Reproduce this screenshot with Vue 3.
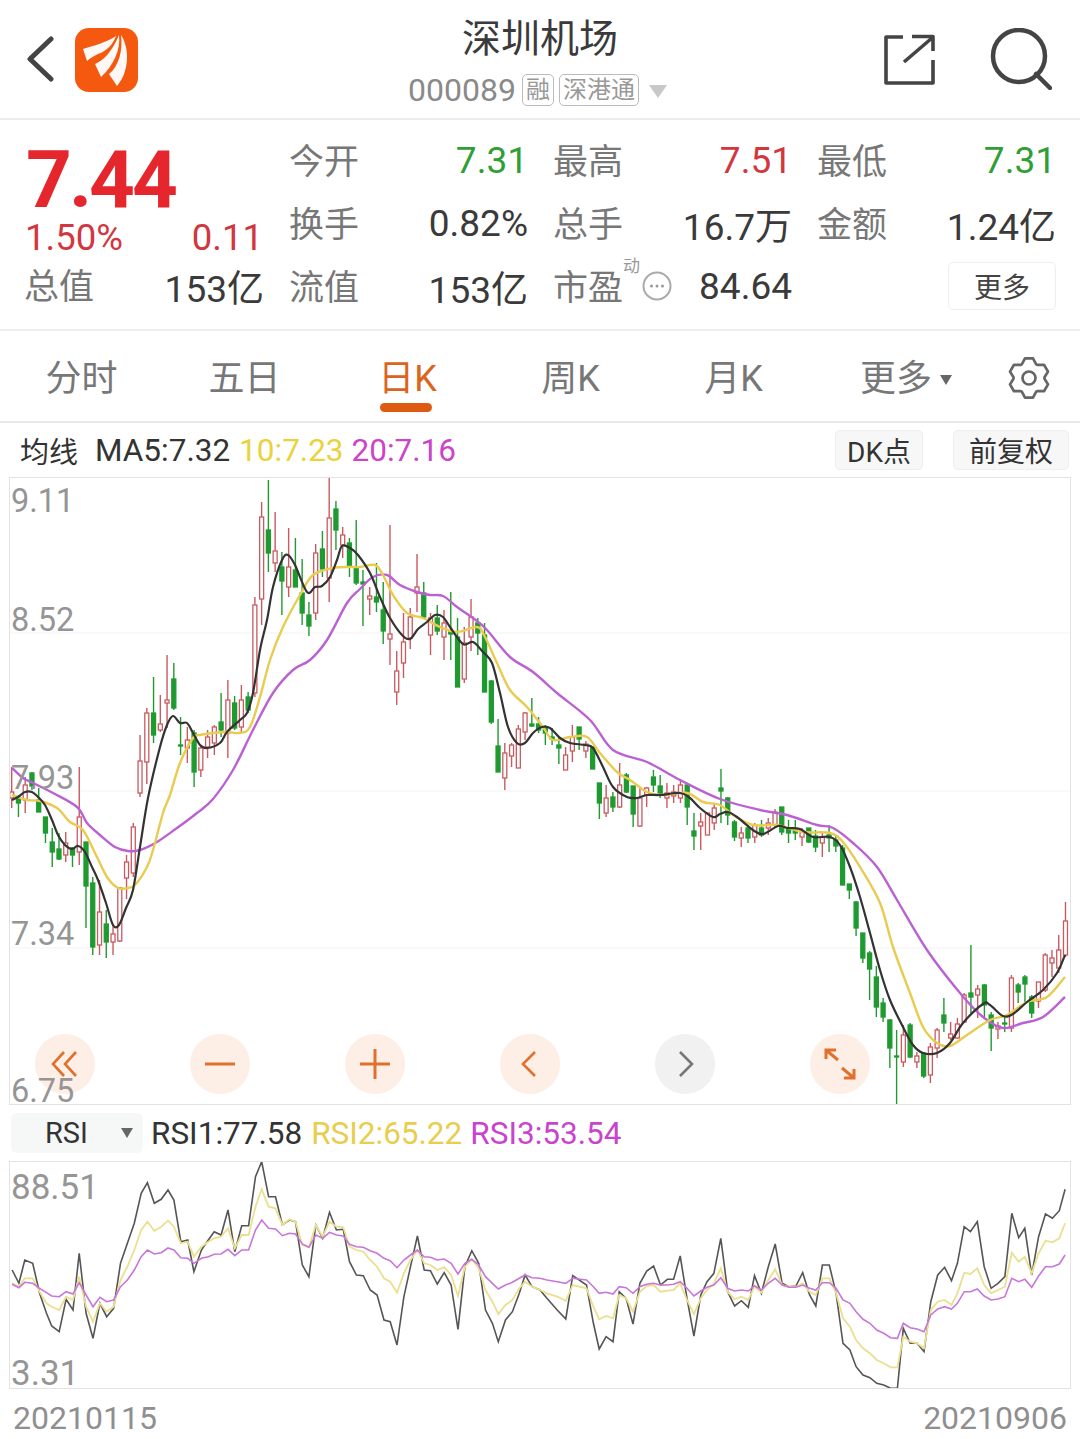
<template>
  <div class="page">
    <header class="topbar">
      <div class="topbar-left">
        <svg class="back" width="28" height="48" viewBox="0 0 28 48">
          <path d="M25 3 L4 23 L25 43" fill="none" stroke="#444" stroke-width="5" stroke-linecap="round" stroke-linejoin="round" />
        </svg>
        <svg class="logo" width="63" height="64" viewBox="0 0 63 64">
          <rect width="63" height="64" rx="14" fill="#f4590f" />
          <path d="M8 21 C18 18 32 14 41 8 C38 16 32 23 23 26 C19 28 15 30 12 33 Z" fill="#fff" opacity="0.96" />
          <path d="M20 36 C28 33 37 24 44 7 C46 22 38 38 26 49 Z" fill="#fff" opacity="0.96" />
          <path d="M34 46 C44 38 48 22 46 7 C52 16 54 30 50 43 C48 50 45 54 42 58 Z" fill="#fff" opacity="0.96" />
        </svg>
      </div>
      <div class="topbar-title">
        <div class="name">深圳机场</div>
        <div class="code-row">
          <span class="code">000089</span>
          <span class="tag">融</span>
          <span class="tag">深港通</span>
          <span class="code-arrow"></span>
        </div>
      </div>
      <div class="topbar-right">
        <svg width="54" height="54" viewBox="0 0 54 54" fill="none" stroke="#444" stroke-width="3.6">
          <path d="M22 5 H5 V51 H52 V28" stroke-linejoin="round" />
          <path d="M23 30 L51 6 M31 4.5 H52 V19" stroke-linejoin="round" />
        </svg>
        <svg width="62" height="62" viewBox="0 0 62 62" fill="none" stroke="#444" stroke-width="4.5">
          <circle cx="29" cy="28" r="26" />
          <path d="M46 46 L60 60" stroke-linecap="round" />
        </svg>
      </div>
    </header>

    <section class="quote">
      <div class="price-col">
        <div class="price">7.44</div>
        <div class="change"><span>1.50%</span><span>0.11</span></div>
        <div class="stat"><span class="label">总值</span><span class="value">153亿</span></div>
      </div>
      <div class="stats">
        <div class="stat" v-for="item in stats" :key="item.label">
          <span class="label">{{ item.label }}</span>
          <span class="value" :class="item.tone">{{ item.value }}</span>
        </div>
        <div class="stat">
          <span class="label pe">市盈<sup>动</sup>
            <svg class="pe-icon" width="30" height="30" viewBox="0 0 30 30">
              <circle cx="15" cy="15" r="13.5" fill="none" stroke="#aaa" stroke-width="2" />
              <circle cx="9.5" cy="15" r="1.5" fill="#999" />
              <circle cx="15" cy="15" r="1.5" fill="#999" />
              <circle cx="20.5" cy="15" r="1.5" fill="#999" />
            </svg>
          </span>
          <span class="value">84.64</span>
        </div>
        <div class="stat stat-more"><button class="more">更多</button></div>
      </div>
    </section>

    <nav class="tabs">
      <div class="tab" v-for="tab in tabs" :key="tab" :class="{ active: tab === '日K' }">{{ tab }}</div>
      <div class="tab tab-drop">更多<span class="drop"></span></div>
      <div class="tab-gear">
        <svg width="42" height="44" viewBox="-21 -22 42 44" fill="none" stroke="#666" stroke-width="2.7" stroke-linejoin="round">
          <path :d="gearPath" />
          <circle r="6.5" />
        </svg>
      </div>
    </nav>

    <div class="ma-row">
      <span class="ma-title">均线</span>
      <span class="ma5">MA5:7.32</span>
      <span class="ma10">10:7.23</span>
      <span class="ma20">20:7.16</span>
      <span class="chip chip-dk">DK点</span>
      <span class="chip chip-fq">前复权</span>
    </div>

    <div class="kline">
      <svg class="kline-svg" width="1060" height="626" viewBox="10 478 1060 626">
        <line v-for="y in [633, 791, 948]" :key="y" x1="10" x2="1070" :y1="y" :y2="y" stroke="#f3f3f3" />
        <g v-for="c in candles" :key="c.x">
          <line :x1="c.x" :x2="c.x" :y1="c.high" :y2="c.low" :stroke="c.color" stroke-width="1.4" />
          <rect :x="c.x - 2" :y="c.top" width="4" :height="c.height" :fill="c.up ? '#fff' : c.color" :stroke="c.color" stroke-width="1.3" />
        </g>
        <path :d="ma20" fill="none" stroke="#bb62d2" stroke-width="2.4" />
        <path :d="ma10" fill="none" stroke="#e9cb50" stroke-width="2.4" />
        <path :d="ma5" fill="none" stroke="#333" stroke-width="2.2" />
      </svg>
      <span class="axis" style="top: 5px">9.11</span>
      <span class="axis" style="top: 124px">8.52</span>
      <span class="axis" style="top: 282px">7.93</span>
      <span class="axis" style="top: 438px">7.34</span>
      <div class="controls">
        <div class="ctrl">
          <svg width="30" height="30" viewBox="0 0 30 30" fill="none" stroke="#e0702e" stroke-width="2.6">
            <path d="M14 3 L3 15 L14 27 M26 3 L15 15 L26 27" />
          </svg>
        </div>
        <div class="ctrl">
          <svg width="30" height="30" viewBox="0 0 30 30" fill="none" stroke="#e0702e" stroke-width="3">
            <path d="M0 15 H30" />
          </svg>
        </div>
        <div class="ctrl">
          <svg width="30" height="30" viewBox="0 0 30 30" fill="none" stroke="#e0702e" stroke-width="3">
            <path d="M0 15 H30 M15 0 V30" />
          </svg>
        </div>
        <div class="ctrl">
          <svg width="30" height="30" viewBox="0 0 30 30" fill="none" stroke="#e0702e" stroke-width="2.6">
            <path d="M20 3 L8 15 L20 27" />
          </svg>
        </div>
        <div class="ctrl ctrl-off">
          <svg width="30" height="30" viewBox="0 0 30 30" fill="none" stroke="#777" stroke-width="2.6">
            <path d="M10 3 L22 15 L10 27" />
          </svg>
        </div>
        <div class="ctrl">
          <svg width="32" height="32" viewBox="0 0 32 32" fill="none" stroke="#e0702e" stroke-width="3">
            <path d="M2 11 V2 H12 M2 2 L14 12 M30 21 V30 H20 M30 30 L18 20" />
          </svg>
        </div>
      </div>
      <span class="axis" style="top: 595px">6.75</span>
    </div>

    <div class="rsi-row">
      <div class="rsi-select">RSI<span class="rsi-arrow"></span></div>
      <span class="rsi1">RSI1:77.58</span>
      <span class="rsi2">RSI2:65.22</span>
      <span class="rsi3">RSI3:53.54</span>
    </div>

    <div class="rsi-chart">
      <svg class="kline-svg" width="1060" height="226" viewBox="10 1162 1060 226">
        <polyline :points="rsi1" fill="none" stroke="#555" stroke-width="1.6" />
        <polyline :points="rsi2" fill="none" stroke="#ebdf90" stroke-width="1.8" />
        <polyline :points="rsi3" fill="none" stroke="#c876d8" stroke-width="1.6" />
      </svg>
      <span class="axis axis-rsi" style="top: 8px">88.51</span>
      <span class="axis axis-rsi" style="top: 194px">3.31</span>
    </div>

    <footer class="dates">
      <span>20210115</span>
      <span>20210906</span>
    </footer>
  </div>
</template>

<script setup>
const tabs = ["分时", "五日", "日K", "周K", "月K"];

const stats = [
  { label: "今开", value: "7.31", tone: "down" },
  { label: "最高", value: "7.51", tone: "up" },
  { label: "最低", value: "7.31", tone: "down" },
  { label: "换手", value: "0.82%" },
  { label: "总手", value: "16.7万" },
  { label: "金额", value: "1.24亿" },
  { label: "流值", value: "153亿" },
];

// gear outline, six teeth
const gearPath = (() => {
  let d = "";
  for (let k = 0; k < 6; k++) {
    const a = (-90 + k * 60) * (Math.PI / 180);
    const pts = [
      [15.5, a - 0.48],
      [20, a - 0.2],
      [20, a + 0.2],
      [15.5, a + 0.48],
    ];
    pts.forEach(([r, t], i) => {
      d += (k === 0 && i === 0 ? "M" : "L") + (r * Math.cos(t)).toFixed(1) + " " + (r * Math.sin(t)).toFixed(1);
    });
  }
  return d + "Z";
})();

// high, body top, body bottom, low, r/g - read off the chart in page pixels
const raw = [
  [767,792,798,808,"r"],[795,798,803,817,"g"],[777,785,800,813,"r"],[772,773,786,790,"g"],[788,800,812,812,"g"],
  [817,817,833,843,"g"],[828,842,852,867,"g"],[833,849,859,860,"g"],[832,843,855,862,"r"],[847,848,855,867,"g"],
  [767,817,852,865,"r"],[842,842,886,928,"g"],[877,883,947,955,"g"],[880,912,945,955,"r"],[910,924,942,958,"g"],
  [925,934,942,955,"r"],[887,888,941,942,"r"],[855,862,878,899,"r"],[823,827,873,877,"r"],[735,761,793,797,"r"],
  [708,713,762,784,"r"],[677,713,735,743,"g"],[695,724,730,732,"r"],[655,700,703,728,"r"],[663,679,708,710,"g"],
  [717,745,746,755,"g"],[727,740,748,763,"r"],[730,733,772,787,"g"],[745,748,770,777,"r"],[730,737,747,758,"r"],
  [725,727,743,755,"r"],[693,722,730,737,"g"],[680,700,733,758,"r"],[696,703,728,730,"g"],[685,700,727,732,"r"],
  [692,697,710,713,"g"],[597,605,693,697,"r"],[502,517,599,625,"r"],[480,530,553,572,"g"],[512,551,563,572,"r"],
  [552,567,581,615,"g"],[528,567,587,597,"r"],[538,570,587,585,"g"],[559,593,613,625,"g"],[602,615,626,636,"g"],
  [544,553,613,620,"r"],[531,549,569,577,"g"],[477,518,578,602,"r"],[501,509,530,550,"g"],[527,535,545,558,"r"],
  [538,543,567,577,"g"],[520,568,583,585,"g"],[570,582,584,626,"g"],[587,596,599,615,"r"],[563,597,602,612,"g"],
  [582,610,631,644,"g"],[525,634,639,665,"r"],[651,671,692,705,"r"],[613,642,663,678,"r"],[608,617,638,649,"r"],
  [554,587,593,612,"r"],[582,593,617,618,"g"],[613,618,635,655,"r"],[605,618,631,635,"g"],[610,623,637,660,"r"],
  [592,632,634,660,"g"],[618,637,687,687,"g"],[627,643,679,683,"r"],[599,617,637,651,"r"],[618,623,633,655,"g"],
  [623,635,692,692,"g"],[680,681,722,724,"g"],[719,746,772,772,"g"],[743,753,778,790,"r"],[743,745,756,767,"r"],
  [725,729,768,768,"r"],[712,713,732,740,"r"],[698,724,726,727,"g"],[717,724,730,733,"g"],[725,728,733,745,"g"],
  [728,737,739,745,"g"],[738,745,748,764,"g"],[747,755,770,770,"r"],[725,737,751,762,"r"],[727,727,739,750,"g"],
  [741,744,751,758,"r"],[747,747,769,769,"g"],[783,783,803,819,"g"],[785,798,813,817,"r"],[792,797,807,812,"g"],
  [763,785,807,808,"r"],[773,775,792,793,"g"],[786,786,814,827,"g"],[788,798,826,827,"r"],[787,788,795,807,"r"],
  [770,777,785,792,"g"],[775,786,795,798,"g"],[783,793,798,808,"r"],[785,792,796,803,"r"],[779,785,798,803,"r"],
  [783,785,807,825,"g"],[813,831,836,850,"g"],[813,822,826,850,"r"],[813,813,835,835,"r"],[803,808,823,830,"r"],
  [769,788,791,823,"g"],[797,798,815,825,"g"],[820,822,837,841,"g"],[827,833,838,847,"r"],[825,828,838,843,"g"],
  [823,825,837,843,"r"],[820,828,835,837,"g"],[818,823,828,835,"r"],[809,812,825,827,"r"],[807,807,832,835,"g"],
  [820,828,833,843,"g"],[820,829,833,840,"g"],[828,832,837,846,"r"],[828,828,842,843,"g"],[830,836,847,852,"g"],
  [832,837,843,857,"r"],[825,835,838,852,"g"],[835,840,846,852,"g"],[845,848,885,885,"g"],[884,884,890,899,"g"],
  [901,902,928,936,"g"],[933,933,958,963,"g"],[951,953,969,1000,"g"],[966,977,1007,1017,"g"],[998,1003,1017,1022,"g"],
  [1019,1020,1048,1068,"g"],[1030,1056,1057,1105,"g"],[1025,1035,1062,1067,"r"],[1023,1025,1057,1058,"g"],[1052,1056,1062,1068,"r"],
  [1052,1053,1076,1078,"g"],[1043,1047,1075,1083,"r"],[1028,1030,1048,1058,"r"],[998,1015,1023,1032,"g"],[1022,1034,1038,1040,"r"],
  [1018,1024,1038,1039,"r"],[993,995,1022,1023,"r"],[945,993,997,1013,"g"],[985,989,995,1018,"r"],[984,985,1005,1017,"g"],
  [1012,1015,1028,1051,"g"],[1022,1026,1029,1039,"r"],[1015,1023,1024,1032,"g"],[975,978,1028,1032,"r"],[983,985,992,1003,"g"],
  [975,977,984,1002,"g"],[995,997,1013,1018,"g"],[982,982,1001,1008,"r"],[953,955,990,992,"r"],[950,958,963,977,"r"],
  [935,950,968,973,"r"],[902,921,955,957,"r"],
];

const candles = raw.map(([high, top, bottom, low, kind], i) => ({
  x: +(11.7 + i * 6.755).toFixed(2),
  high,
  low,
  top,
  height: bottom - top,
  up: kind === "r",
  color: kind === "r" ? "#c95a60" : "#1f9a30",
}));

// Catmull-Rom through the points so the averages stay soft
const smooth = (str) => {
  const p = str.trim().split(/\s+/).map((s) => s.split(",").map(Number));
  let d = `M${p[0][0]} ${p[0][1]}`;
  for (let i = 0; i < p.length - 1; i++) {
    const a = p[i - 1] || p[i];
    const b = p[i];
    const c = p[i + 1];
    const e = p[i + 2] || c;
    const c1 = [b[0] + (c[0] - a[0]) / 6, b[1] + (c[1] - a[1]) / 6];
    const c2 = [c[0] - (e[0] - b[0]) / 6, c[1] - (e[1] - b[1]) / 6];
    d += `C${c1[0].toFixed(1)} ${c1[1].toFixed(1)} ${c2[0].toFixed(1)} ${c2[1].toFixed(1)} ${c[0]} ${c[1]}`;
  }
  return d;
};

const ma5 = smooth(`12,800 18,797 25,792 32,792 38,797 45,805 52,820 58,835 65,845 72,849 78,846 85,852 92,867 98,880 106,903 113,925 119,925 126,908 133,890 140,847 148,798
  160,747 167,725 173,716 180,723 187,723 193,733 200,745 207,748 220,743 227,732 240,720 247,713 253,693 260,650 267,620 273,587 282,560 288,555 295,565 307,592 315,587 322,586 330,577 337,560 342,546 350,548 358,555
  370,573 380,597 390,618 402,635 410,639 418,629 427,622 435,615 443,617 450,627 463,644 473,642 483,652 492,663 500,693 508,727 517,743 525,743 533,733 542,727 550,728 560,738 570,743 585,745 593,748 603,767 613,787 627,797 637,798 647,795 660,795 680,793 690,798 700,808 713,817 720,814
  728,812 737,817 753,830 763,834 778,826 787,828 800,829 813,837 830,837 840,845 850,867 860,897 870,933 880,970 890,1000 903,1027 913,1045 923,1053 937,1053 950,1043 963,1023 983,1004 990,1005 1003,1016 1013,1014 1027,1002 1043,990 1057,973 1065,955`);

const ma10 = smooth(`12,795 27,800 40,801 57,808 70,822 83,830 97,857 107,877 118,888 127,888 135,885 147,867 153,850 163,813 170,795 180,763 193,738 200,735 213,733 227,732 240,733 250,727 260,697 270,660 283,627 300,595 313,575 333,568 350,567 360,567
  375,565 383,575 393,595 407,613 423,618 440,627 457,632 477,627 485,637 497,663 510,690 527,707 543,727 553,740 570,737 587,737 600,753 617,772 630,780 647,792 663,795 687,793 703,802 720,805
  733,815 753,825 777,825 803,832 830,833 843,842 860,867 880,903 893,947 910,993 923,1027 937,1043 950,1046 967,1035 990,1020 1007,1015 1027,1002 1047,997 1065,977`);

const ma20 = smooth(`12,768 23,778 33,783 53,793 77,807 87,823 100,835 115,847 128,851 140,850 157,842 177,828 197,813 213,799 233,770 253,730 273,693 293,670 310,660 327,640 347,603 360,589
  373,577 387,575 400,585 417,592 430,595 443,596 457,607 473,618 487,630 510,657 533,672 557,693 590,720 613,750 647,762 680,780 720,799
  760,810 787,815 817,825 833,828 853,843 877,867 897,900 927,950 960,993 983,1017 1003,1028 1023,1023 1043,1017 1065,997`);

// RSI lines read from two crops; convert back to page pixels
const crop = (str, left) =>
  str
    .trim()
    .split(/\s+/)
    .map((s) => {
      const [x, y] = s.split(",").map(Number);
      return `${(left + x / 2.904).toFixed(1)},${(1110 + y / 3).toFixed(1)}`;
    })
    .join(" ");

const rsi1 =
  crop(`35,480 55,520 72,450 95,460 115,550 135,610 150,648 172,665 192,568 212,600 230,430 250,610 270,685 290,580 310,620 330,595 350,460 370,400 390,340 410,250 428,218 448,280 468,268 488,240 505,270 525,395 545,390 563,485 585,420 605,390 622,365 642,375 662,300 682,425 702,347 722,347 742,200 760,155 780,260 800,260 820,345 840,330 858,335 878,465 897,500 917,345 937,385 957,307 977,360 997,358 1015,455 1035,495 1055,497 1075,540 1095,555 1115,630 1133,635 1153,705 1173,560 1192,470 1212,378 1232,480 1250,482 1270,522 1290,488 1310,525 1330,658 1350,470 1370,422 1390,460 1410,600 1430,640 1447,695 1468,630 1488,605 1508,550 1525,495 1545,530`, 0) +
  " " +
  crop(`0,540 20,565 50,600 75,627 95,497 135,525 155,640 172,717 192,680 212,695 230,545 250,565 270,642 290,520 310,483 330,468 350,525 370,508 388,508 407,438 427,565 447,678 467,555 485,515 505,490 525,385 545,545 565,588 585,572 605,592 623,497 643,550 663,470 683,402 703,520 723,530 743,528 763,488 783,555 801,588 820,465 840,465 860,550 880,700 900,720 918,770 938,795 958,803 978,820 998,825 1018,835 1038,835 1055,655 1075,700 1095,700 1115,725 1135,575 1155,495 1175,472 1195,512 1212,460 1232,350 1250,365 1270,335 1290,470 1310,535 1330,520 1350,500 1370,310 1390,383 1408,355 1428,495 1448,380 1468,312 1488,325 1508,302 1525,238`, 540);

const rsi2 =
  crop(`35,520 55,530 72,505 95,505 115,545 135,580 150,590 172,600 192,560 212,570 230,500 250,590 270,635 290,580 310,605 330,590 350,510 370,470 390,420 410,360 428,335 448,362 468,350 488,332 505,350 525,400 545,395 563,440 585,410 605,395 622,385 642,380 662,355 682,415 702,375 722,375 742,290 760,238 780,290 800,295 820,345 840,328 858,335 878,405 897,412 917,345 937,380 957,335 977,350 997,352 1015,410 1035,420 1055,425 1075,450 1095,470 1115,505 1133,515 1153,548 1173,490 1192,450 1212,420 1232,460 1250,465 1270,480 1290,472 1310,495 1330,558 1350,470 1370,448 1390,475 1410,540 1430,575 1447,612 1468,585 1488,570 1508,535 1525,515 1545,530`, 0) +
  " " +
  crop(`0,540 20,550 50,560 75,572 95,525 135,535 155,590 172,628 192,618 212,625 230,555 250,565 270,605 290,545 310,528 330,525 350,545 370,542 388,540 407,520 427,570 447,612 467,565 485,540 505,520 525,475 545,545 565,568 585,560 605,570 623,530 643,548 663,510 683,478 703,525 723,530 743,530 763,520 783,545 801,555 820,505 840,505 860,550 880,625 900,650 918,690 938,715 958,730 978,750 998,760 1018,772 1038,772 1055,680 1075,695 1095,700 1115,715 1135,600 1155,575 1175,570 1195,585 1212,550 1232,488 1250,492 1270,475 1290,525 1310,550 1330,540 1350,530 1370,428 1390,455 1408,440 1428,490 1448,430 1468,392 1488,397 1508,385 1525,340`, 540);

const rsi3 =
  crop(`35,523 55,533 72,517 95,520 115,535 135,548 150,558 172,560 192,545 212,552 230,518 250,555 270,590 290,562 310,575 330,570 350,530 370,510 390,480 410,440 428,420 448,432 468,428 488,414 505,420 525,443 545,445 563,460 585,445 605,440 622,433 642,432 662,418 682,437 702,420 722,420 742,360 760,330 780,355 800,357 820,377 840,370 858,372 878,402 897,412 917,375 937,385 957,367 977,375 997,378 1015,403 1035,410 1055,412 1075,422 1095,430 1115,445 1133,452 1153,473 1173,450 1192,435 1212,420 1232,440 1250,442 1270,450 1290,447 1310,460 1330,492 1350,460 1370,448 1390,465 1410,500 1430,520 1447,537 1468,525 1488,517 1508,505 1525,495 1545,503`, 0) +
  " " +
  crop(`0,505 20,510 50,515 75,520 95,505 135,510 155,530 172,550 192,547 212,552 230,530 250,533 270,550 290,530 310,523 330,520 350,525 370,525 388,523 407,515 427,535 447,558 467,543 485,532 505,525 525,503 545,535 565,543 585,540 605,543 623,527 643,540 663,520 683,505 703,525 723,532 743,532 763,525 783,535 801,540 820,518 840,518 860,535 880,570 900,580 918,605 938,628 958,640 978,660 998,670 1018,683 1038,685 1055,640 1075,653 1095,657 1115,665 1135,615 1155,597 1175,590 1195,597 1212,580 1232,545 1250,545 1270,537 1290,558 1310,570 1330,567 1350,560 1370,505 1390,515 1408,508 1428,532 1448,498 1468,470 1488,470 1508,462 1525,435`, 540);
</script>

<style>
body {
  margin: 0;
  background: #fff;
}
</style>

<style scoped>
.page {
  width: 1080px;
  height: 1439px;
  overflow: hidden;
  background: #fff;
  color: #333;
  font-family: Roboto, "Noto Sans CJK SC", sans-serif;
}

.topbar {
  height: 120px;
  box-sizing: border-box;
  border-bottom: 2px solid #ececec;
  display: grid;
  grid-template-columns: 1fr auto 1fr;
  align-items: start;
}
.topbar-left {
  display: flex;
  align-items: center;
  gap: 21px;
  padding: 28px 0 0 26px;
}
.topbar-title {
  text-align: center;
}
.name {
  font-size: 39px;
  line-height: 46px;
  margin-top: 16px;
  color: #3a3a3a;
}
.code-row {
  display: flex;
  align-items: center;
  gap: 5px;
  margin-top: 8px;
  height: 40px;
  padding-right: 5px;
}
.code {
  font-size: 32px;
  color: #8a8a8a;
  margin-right: 1px;
}
.tag {
  font-size: 24px;
  line-height: 30px;
  border: 1.5px solid #bbb;
  border-radius: 5px;
  color: #999;
  padding: 0 3px;
}
.code-arrow {
  width: 0;
  height: 0;
  margin-left: 5px;
  margin-top: 2px;
  border-left: 9px solid transparent;
  border-right: 9px solid transparent;
  border-top: 13px solid #c8c8c8;
}
.topbar-right {
  display: flex;
  justify-content: flex-end;
  align-items: center;
  gap: 55px;
  padding: 28px 28px 0 0;
}

.quote {
  height: 211px;
  box-sizing: border-box;
  border-bottom: 2px solid #eeeeee;
  display: flex;
  padding: 8px 0 0 26px;
}
.price-col {
  width: 236px;
  margin-right: 27px;
}
.price {
  font-size: 80px;
  font-weight: 700;
  line-height: 80px;
  letter-spacing: -3px;
  margin-top: 12px;
  color: #e5262c;
}
.change {
  display: flex;
  justify-content: space-between;
  font-size: 36.5px;
  line-height: 40px;
  margin: -2px -1px 0 -1px;
  color: #d2373f;
}
.stats {
  display: grid;
  grid-template-columns: repeat(3, 239px);
  grid-auto-rows: 63px;
  column-gap: 25px;
}
.stat {
  display: flex;
  justify-content: space-between;
  align-items: center;
  height: 63px;
}
.price-col .stat {
  margin: -5px -2px 0 -2px;
}
.label {
  font-size: 35px;
  margin-bottom: 2px;
  color: #777;
}
.value {
  font-size: 37px;
  margin-top: 2px;
  color: #3a3a3a;
}
.value.up {
  color: #d2373f;
}
.value.down {
  color: #2f9e37;
}
.pe {
  display: flex;
  align-items: center;
}
.pe sup {
  font-size: 17px;
  color: #999;
  align-self: flex-start;
  line-height: 20px;
  margin-top: -3px;
}
.pe-icon {
  margin: 2px 0 0 2px;
}
.stat-more {
  justify-content: flex-end;
}
.more {
  width: 108px;
  height: 48px;
  padding: 0;
  background: #fff;
  border: 1px solid #eee;
  border-radius: 5px;
  font: 28px Roboto, "Noto Sans CJK SC", sans-serif;
  color: #444;
}

.tabs {
  height: 92px;
  box-sizing: border-box;
  border-bottom: 2px solid #e8e8e8;
  display: flex;
}
.tab {
  position: relative;
  width: 163px;
  text-align: center;
  font-size: 36px;
  line-height: 96px;
  color: #777;
}
.tab.active {
  color: #dc6420;
}
.tab.active::after {
  content: "";
  position: absolute;
  left: 54px;
  bottom: 9px;
  width: 52px;
  height: 9px;
  border-radius: 5px;
  background: #dd5a10;
}
.tab-drop {
  width: 182px;
}
.drop {
  display: inline-block;
  margin-left: 8px;
  vertical-align: 6px;
  border-left: 6px solid transparent;
  border-right: 6px solid transparent;
  border-top: 10px solid #666;
}
.tab-gear {
  display: flex;
  align-items: center;
  padding-top: 4px;
  margin-left: 11px;
}

.ma-row {
  height: 54px;
  display: flex;
  align-items: center;
  font-size: 31.5px;
  padding-left: 20px;
}
.ma-title {
  font-size: 29px;
  margin-right: 17px;
}
.ma5 {
  margin-right: 9px;
}
.ma10 {
  color: #ead23c;
  margin-right: 8px;
}
.ma20 {
  color: #cc44c8;
}
.chip {
  height: 40px;
  box-sizing: border-box;
  display: flex;
  align-items: center;
  justify-content: center;
  font-size: 28px;
  background: #f7f7f7;
  border: 1px solid #eee;
  border-radius: 5px;
}
.chip-dk {
  width: 88px;
  margin-left: auto;
  margin-right: 30px;
}
.chip-fq {
  width: 116px;
  margin-right: 11px;
}

.kline,
.rsi-chart {
  position: relative;
  width: 1062px;
  margin-left: 9px;
  box-sizing: border-box;
  border: 1px solid #e3e3e3;
}
.kline {
  height: 628px;
}
.kline-svg {
  display: block;
}
.axis {
  position: absolute;
  left: 1px;
  font-size: 32.5px;
  line-height: 36px;
  color: #959595;
}
.axis-rsi {
  font-size: 35px;
}
.controls {
  position: absolute;
  left: 25px;
  top: 556px;
  display: flex;
  gap: 95px;
}
.ctrl {
  width: 60px;
  height: 60px;
  border-radius: 50%;
  background: #fdeee6;
  display: flex;
  align-items: center;
  justify-content: center;
}
.ctrl-off {
  background: #f1f1f1;
}

.rsi-row {
  height: 56px;
  display: flex;
  align-items: center;
  font-size: 31.5px;
  padding-left: 11px;
}
.rsi-select {
  position: relative;
  width: 132px;
  height: 40px;
  box-sizing: border-box;
  padding-left: 34px;
  line-height: 40px;
  background: #f6f7f7;
  border-radius: 6px;
  font-size: 29px;
  margin-right: 8px;
}
.rsi-arrow {
  position: absolute;
  right: 10px;
  top: 15px;
  border-left: 6px solid transparent;
  border-right: 6px solid transparent;
  border-top: 10px solid #666;
}
.rsi2 {
  color: #e9cd4c;
  margin-left: 9px;
}
.rsi3 {
  color: #c844cc;
  margin-left: 8px;
}
.rsi-chart {
  height: 228px;
}

.dates {
  display: flex;
  justify-content: space-between;
  padding: 9px 13px 0 13px;
  font-size: 32px;
  line-height: 40px;
  color: #8f8f8f;
}
</style>
